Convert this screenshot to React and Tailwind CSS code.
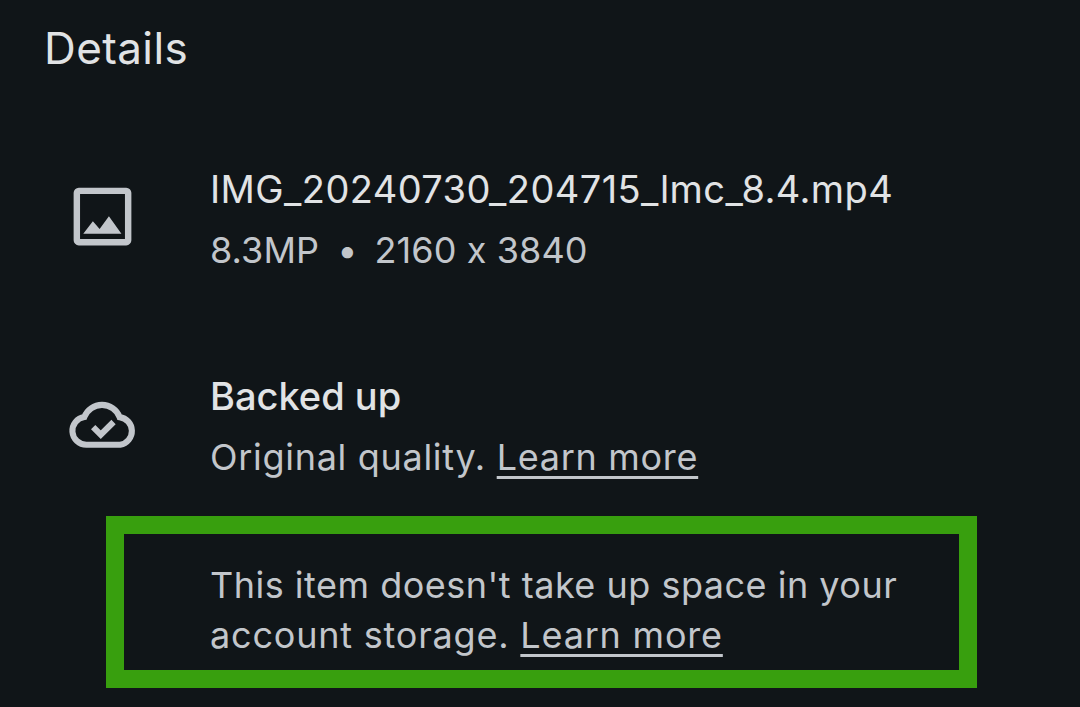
import React from 'react';

function ImageIcon() {
  return (
    <svg width="77" height="77" viewBox="0 0 24 24" className="ml-[64px] mb-[6px] text-[#c2c6cb]" fill="currentColor">
      <path fillRule="evenodd" d="M4.6 3h14.8A1.6 1.6 0 0 1 21 4.6v14.8a1.6 1.6 0 0 1-1.6 1.6H4.6A1.6 1.6 0 0 1 3 19.4V4.6A1.6 1.6 0 0 1 4.6 3zM5 5v14h14V5H5z" />
      <path d="M6 17.4l3-3.9 2.1 2.4 2.9-4 3.9 5.5z" />
    </svg>
  );
}

function CloudIcon() {
  return (
    <svg width="73" height="73" viewBox="0 0 24 24" className="ml-[67px] mb-[6px] text-[#c2c6cb]" fill="none" stroke="currentColor">
      <path strokeWidth="2" d="M6.4 19a4.6 4.6 0 0 1-.7-9.15A6.2 6.2 0 0 1 17.3 9.9a4.6 4.6 0 0 1 .2 9.1z" />
      <path strokeWidth="2" d="M8.6 13.2l2.5 2.5 4.2-4.2" />
    </svg>
  );
}

function Row({ icon, children }) {
  return (
    <div className="flex">
      <div className="w-[210px] shrink-0 flex items-center">{icon}</div>
      <div>{children}</div>
    </div>
  );
}

export default function App() {
  return (
    <div className="w-[1080px] h-[707px] overflow-hidden bg-[#101518] font-['Inter',sans-serif] [font-feature-settings:'calt'_0] text-[#c2c6cb]">
      <div className="pl-[44px] pt-[22px] text-[44px] tracking-[0.4px] leading-[52px] text-[#e1e3e5]">Details</div>
      <div className="mt-[84px]">
        <Row icon={<ImageIcon />}>
          <div className="text-[38px] tracking-[0.4px] leading-[62px] text-[#e1e3e5] whitespace-nowrap">IMG_20240730_204715_lmc_8.4.mp4</div>
          <div className="text-[36px] tracking-[0.1px] leading-[60px] whitespace-nowrap">8.3MP<span className="ml-[18px] mr-[17px]">•</span>2160 x 3840</div>
        </Row>
      </div>
      <div className="mt-[85px]">
        <Row icon={<CloudIcon />}>
          <div className="text-[38px] leading-[62px] font-medium text-[#e1e3e5]">Backed up</div>
          <div className="text-[36px] tracking-[0.7px] leading-[60px]">
            Original quality. <span className="underline underline-offset-[6px]">Learn more</span>
          </div>
        </Row>
      </div>
      <div className="ml-[106px] mt-[29px] w-[871px] h-[172px] border-[18px] border-[#389f0e] pl-[86px] pt-[26px]">
        <div className="text-[36px] tracking-[0.5px] leading-[50px] whitespace-nowrap">This item doesn't take up space in your</div>
        <div className="text-[36px] tracking-[0.8px] leading-[50px] whitespace-nowrap">
          account storage. <span className="underline underline-offset-[6px]">Learn more</span>
        </div>
      </div>
    </div>
  );
}
